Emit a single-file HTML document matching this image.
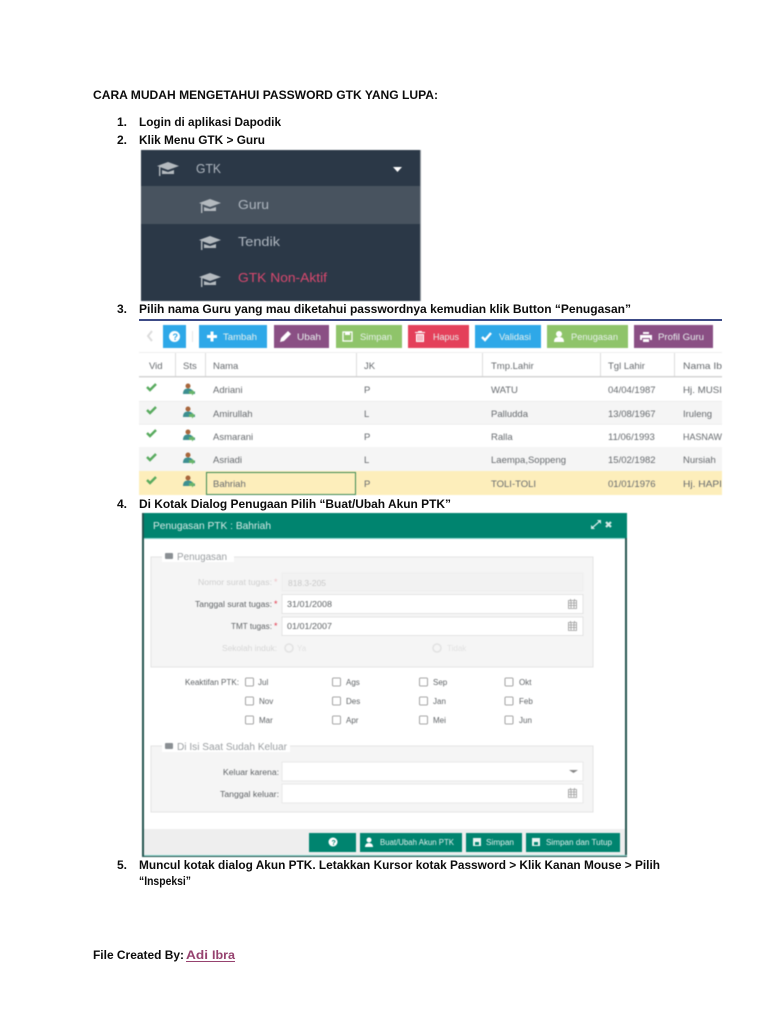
<!DOCTYPE html>
<html><head><meta charset="utf-8"><title>Cara Mudah</title>
<style>
html,body{margin:0;padding:0;background:#fff;width:768px;height:1024px;overflow:hidden}
svg{display:block;font-family:"Liberation Sans",sans-serif}
.d{font-weight:bold;font-size:12px;fill:#0c0c0c}
.t{font-size:9.500px;fill:#666a6e}
.b{font-size:9px;fill:#e8f2ee}
.l{font-size:8px;fill:#606467}
.m{font-size:13px;fill:#aeb6bf}
.blur{filter:blur(.5px)}
</style></head><body>
<svg width="768" height="1024" viewBox="0 0 768 1024">
<rect width="768" height="1024" fill="#fff"/>
<g class="d">
<text x="93" y="99" textLength="345" lengthAdjust="spacingAndGlyphs">CARA MUDAH MENGETAHUI PASSWORD GTK YANG LUPA:</text>
<text x="117" y="126">1.</text><text x="139" y="126" textLength="142" lengthAdjust="spacingAndGlyphs">Login di aplikasi Dapodik</text>
<text x="117" y="144">2.</text><text x="139" y="144" textLength="126" lengthAdjust="spacingAndGlyphs">Klik Menu GTK &gt; Guru</text>
<text x="117" y="313">3.</text><text x="139" y="313" textLength="492" lengthAdjust="spacingAndGlyphs">Pilih nama Guru yang mau diketahui passwordnya kemudian klik Button “Penugasan”</text>
<text x="117" y="508">4.</text><text x="139" y="508" textLength="312" lengthAdjust="spacingAndGlyphs">Di Kotak Dialog Penugaan Pilih “Buat/Ubah Akun PTK”</text>
<text x="117" y="869">5.</text><text x="139" y="869" textLength="521" lengthAdjust="spacingAndGlyphs">Muncul kotak dialog Akun PTK. Letakkan Kursor kotak Password &gt; Klik Kanan Mouse &gt; Pilih</text>
<text x="139" y="885" textLength="52" lengthAdjust="spacingAndGlyphs">“Inspeksi”</text>
<text x="93" y="959" textLength="91" lengthAdjust="spacingAndGlyphs">File Created By:</text>
<text x="186" y="959" textLength="22" lengthAdjust="spacingAndGlyphs" style="fill:#96426f">Adi</text>
<text x="212" y="959" textLength="23" lengthAdjust="spacingAndGlyphs" style="fill:#96426f">Ibra</text>
</g>
<rect x="186" y="961" width="49" height="1" fill="#96426f"/>

<!-- Menu -->
<g class="blur">
<rect x="141" y="150" width="279" height="151" fill="#2b3847"/>
<rect x="141" y="186" width="279" height="38" fill="#48535f"/>
<rect x="420" y="150" width="1" height="151" fill="#9aa0a6"/>
<g fill="#b4babf">
<path d="M157 166l11-4 11 4-11 4z"/><path d="M162 170v4h12v-4l-6 2zM159 167h1.400v9h-1.400z"/>
<path d="M199 203l11-4 11 4-11 4z"/><path d="M204 207v4h12v-4l-6 2zM201 204h1.400v9h-1.400z"/>
<path d="M199 240l11-4 11 4-11 4z"/><path d="M204 244v4h12v-4l-6 2zM201 241h1.400v9h-1.400z"/>
<path d="M199 277l11-4 11 4-11 4z"/><path d="M204 281v4h12v-4l-6 2zM201 278h1.400v9h-1.400z"/>
</g>
<path d="M393 167h9l-4.500 5z" fill="#fff"/>
<text class="m" x="196" y="173" textLength="25" lengthAdjust="spacingAndGlyphs">GTK</text>
<text class="m" x="238" y="209" textLength="31" lengthAdjust="spacingAndGlyphs">Guru</text>
<text class="m" x="238" y="246" textLength="42" lengthAdjust="spacingAndGlyphs">Tendik</text>
<text class="m" x="238" y="282" textLength="89" lengthAdjust="spacingAndGlyphs" style="fill:#d9486e">GTK Non-Aktif</text>
</g>

<!-- Table -->
<rect x="139" y="319" width="583" height="2" fill="#3c4a86"/>
<g class="blur">
<path d="M152 331l-4 5 4 5" fill="none" stroke="#dcdcdc" stroke-width="2"/>
<rect x="163" y="325" width="23" height="23" fill="#2ea8e8"/>
<circle cx="174.500" cy="336.500" r="5.500" fill="#fff"/><text x="172.500" y="340" font-size="9" font-weight="bold" fill="#2ea8e8">?</text>
<rect x="192" y="331" width="1" height="11" fill="#e8e8e8"/>
<rect x="199" y="325" width="68" height="23" fill="#2ea8e8"/>
<path d="M207 335h3.500v-3.500h3v3.500h3.500v3h-3.500v3.500h-3v-3.500h-3.500z" fill="#fff"/>
<text class="b" x="223" y="340" textLength="34" lengthAdjust="spacingAndGlyphs">Tambah</text>
<rect x="274" y="325" width="55" height="23" fill="#8a4f84"/>
<path d="M280 342l1-4 7-7 3 3-7 7z" fill="#fff"/>
<text class="b" x="297" y="340" textLength="24" lengthAdjust="spacingAndGlyphs">Ubah</text>
<rect x="336" y="325" width="66" height="23" fill="#8fc46a"/>
<rect x="343" y="332" width="9" height="9" fill="none" stroke="#fff" stroke-width="1.300"/><rect x="345" y="332" width="5" height="3" fill="#fff"/>
<text class="b" x="360" y="340" textLength="32" lengthAdjust="spacingAndGlyphs">Simpan</text>
<rect x="408" y="325" width="61" height="23" fill="#e4405a"/>
<path d="M416 334h8v8h-8z" fill="#fff"/><path d="M415 332h10v1h-10zM418 331h4v1h-4z" fill="#fff"/><path d="M418 335v6M420 335v6M422 335v6" stroke="#e4405a" stroke-width=".7"/>
<text class="b" x="433" y="340" textLength="26" lengthAdjust="spacingAndGlyphs">Hapus</text>
<rect x="475" y="325" width="66" height="23" fill="#2ea8e8"/>
<path d="M482 337l3 3 6-7" fill="none" stroke="#fff" stroke-width="2.400"/>
<text class="b" x="499" y="340" textLength="32" lengthAdjust="spacingAndGlyphs">Validasi</text>
<rect x="547" y="325" width="81" height="23" fill="#8fc46a"/>
<circle cx="559" cy="334" r="3" fill="#fff"/><path d="M554 342c0-4 2-5 5-5s5 1 5 5z" fill="#fff"/>
<text class="b" x="571" y="340" textLength="47" lengthAdjust="spacingAndGlyphs">Penugasan</text>
<rect x="634" y="325" width="79" height="23" fill="#8a4f84"/>
<path d="M640 335h12v5h-2v-2h-8v2h-2zM643 332h6v2h-6zM643 339h6v3h-6z" fill="#fff"/>
<text class="b" x="658" y="340" textLength="46" lengthAdjust="spacingAndGlyphs">Profil Guru</text>

<rect x="139" y="352" width="583" height="1" fill="#eee"/>
<rect x="139" y="376" width="583" height="1.500" fill="#d4d4d4"/>
<rect x="139" y="401" width="583" height="23" fill="#f5f5f5"/>
<rect x="139" y="447" width="583" height="24" fill="#f5f5f5"/>
<rect x="139" y="471" width="583" height="24" fill="#fdeebb"/>
<rect x="139" y="401" width="583" height=".6" fill="#e6e6e6"/><rect x="139" y="424" width="583" height=".6" fill="#e6e6e6"/>
<g fill="#dedede">
<rect x="175" y="353" width="1" height="23"/><rect x="205" y="353" width="1" height="23"/><rect x="356" y="353" width="1" height="23"/><rect x="482" y="353" width="1" height="23"/><rect x="600" y="353" width="1" height="23"/><rect x="674" y="353" width="1" height="23"/>
</g>
<rect x="206.500" y="472.500" width="149" height="22" fill="none" stroke="#3e8a55"/>

<g class="t">
<text x="149" y="369">Vid</text><text x="183" y="369">Sts</text><text x="213" y="369">Nama</text><text x="364" y="369">JK</text><text x="491" y="369">Tmp.Lahir</text><text x="608" y="369">Tgl Lahir</text><text x="683" y="369" textLength="39" lengthAdjust="spacingAndGlyphs">Nama Ib</text>
<text x="213" y="393">Adriani</text><text x="364" y="393">P</text><text x="491" y="393">WATU</text><text x="608" y="393">04/04/1987</text><text x="683" y="393" textLength="39" lengthAdjust="spacingAndGlyphs">Hj. MUSI</text>
<text x="213" y="417">Amirullah</text><text x="364" y="417">L</text><text x="491" y="417">Palludda</text><text x="608" y="417">13/08/1967</text><text x="683" y="417">Iruleng</text>
<text x="213" y="440">Asmarani</text><text x="364" y="440">P</text><text x="491" y="440">Ralla</text><text x="608" y="440">11/06/1993</text><text x="683" y="440" textLength="39" lengthAdjust="spacingAndGlyphs">HASNAW</text>
<text x="213" y="463">Asriadi</text><text x="364" y="463">L</text><text x="491" y="463">Laempa,Soppeng</text><text x="608" y="463">15/02/1982</text><text x="683" y="463">Nursiah</text>
<text x="213" y="487">Bahriah</text><text x="364" y="487">P</text><text x="491" y="487">TOLI-TOLI</text><text x="608" y="487">01/01/1976</text><text x="683" y="487" textLength="39" lengthAdjust="spacingAndGlyphs">Hj. HAPI</text>
</g>
<g fill="none" stroke="#58ab5e" stroke-width="2.400">
<path d="M147 387l3 3 6-6"/><path d="M147 410l3 3 6-6"/><path d="M147 433l3 3 6-6"/><path d="M147 457l3 3 6-6"/><path d="M147 480l3 3 6-6"/>
</g>
<g>
<g><circle cx="188" cy="386" r="2.500" fill="#a8663c"/><path d="M183 394c0-4 2-5.500 5-5.500s4 1 4.500 3h2.500v2.500z" fill="#3d8f90"/><path d="M189 391h3v-1.500l3 3-3 3v-1.500h-3z" fill="#69b56a"/></g>
<g><circle cx="188" cy="409" r="2.500" fill="#a8663c"/><path d="M183 417c0-4 2-5.500 5-5.500s4 1 4.500 3h2.500v2.500z" fill="#3d8f90"/><path d="M189 414h3v-1.500l3 3-3 3v-1.500h-3z" fill="#69b56a"/></g>
<g><circle cx="188" cy="432" r="2.500" fill="#a8663c"/><path d="M183 440c0-4 2-5.500 5-5.500s4 1 4.500 3h2.500v2.500z" fill="#3d8f90"/><path d="M189 437h3v-1.500l3 3-3 3v-1.500h-3z" fill="#69b56a"/></g>
<g><circle cx="188" cy="455" r="2.500" fill="#a8663c"/><path d="M183 463c0-4 2-5.500 5-5.500s4 1 4.500 3h2.500v2.500z" fill="#3d8f90"/><path d="M189 460h3v-1.500l3 3-3 3v-1.500h-3z" fill="#69b56a"/></g>
<g><circle cx="188" cy="478" r="2.500" fill="#a8663c"/><path d="M183 486c0-4 2-5.500 5-5.500s4 1 4.500 3h2.500v2.500z" fill="#3d8f90"/><path d="M189 483h3v-1.500l3 3-3 3v-1.500h-3z" fill="#69b56a"/></g>
</g>
</g>

<!-- Dialog -->
<g class="blur">
<rect x="142" y="513" width="485" height="344" fill="#24544f"/>
<rect x="144" y="513" width="481" height="342" fill="#fff"/>
<rect x="144" y="513" width="483" height="25" fill="#00846f"/>
<rect x="144" y="538" width="481" height="1" fill="#8fd8d0"/>
<text x="153" y="529" font-size="10.500" fill="#d9ece8" textLength="118" lengthAdjust="spacingAndGlyphs">Penugasan PTK : Bahriah</text>
<path d="M592 528l8-7" stroke="#d5ebe7" stroke-width="1.200" fill="none"/><path d="M597 520h4v4zM591 525v4h4z" fill="#d5ebe7"/>
<path d="M606 522l5 5M611 522l-5 5" stroke="#d5ebe7" stroke-width="2.200"/>

<rect x="151" y="557" width="442" height="110" fill="#f5f5f5" stroke="#e4e4e4"/>
<rect x="162" y="550" width="72" height="12" fill="#fff"/>
<rect x="165" y="553" width="8" height="6" rx="1" fill="#8a8f93"/>
<text x="177" y="560" font-size="10" fill="#9a9ea1" textLength="50" lengthAdjust="spacingAndGlyphs">Penugasan</text>
<rect x="282" y="573" width="301" height="18" fill="#f2f2f2" stroke="#eeeeee"/>
<rect x="282" y="594.500" width="301" height="19" fill="#fff" stroke="#e4e4e4"/>
<rect x="282" y="617" width="301" height="18.500" fill="#fff" stroke="#e4e4e4"/>
<g class="l">
<text x="198" y="585" textLength="74" lengthAdjust="spacingAndGlyphs" style="fill:#cfcfcf">Nomor surat tugas:</text>
<text x="195" y="607" textLength="77" lengthAdjust="spacingAndGlyphs">Tanggal surat tugas:</text>
<text x="231" y="629" textLength="41" lengthAdjust="spacingAndGlyphs">TMT tugas:</text>
<text x="222" y="651" textLength="55" lengthAdjust="spacingAndGlyphs" style="fill:#d6d6d6">Sekolah induk:</text>
<text x="288" y="586" textLength="38" lengthAdjust="spacingAndGlyphs" style="fill:#c9c9c9">818.3-205</text>
<text x="287" y="607" textLength="45" lengthAdjust="spacingAndGlyphs">31/01/2008</text>
<text x="287" y="629" textLength="45" lengthAdjust="spacingAndGlyphs">01/01/2007</text>
<text x="297" y="651" style="fill:#e2e2e2">Ya</text>
<text x="447" y="651" style="fill:#e2e2e2">Tidak</text>
</g>
<g fill="#e23a4e" font-size="9"><text x="274" y="607">*</text><text x="274" y="629">*</text></g>
<text x="274" y="585" font-size="9" fill="#eec5c9">*</text>
<circle cx="289" cy="648" r="4" fill="none" stroke="#e2e2e2" stroke-width="1.500"/>
<circle cx="437" cy="648" r="4" fill="none" stroke="#e2e2e2" stroke-width="1.500"/>

<g fill="#fff" stroke="#8c8c8c" stroke-width=".8">
<rect x="245.500" y="678" width="8" height="8" rx="1"/><rect x="332.500" y="678" width="8" height="8" rx="1"/><rect x="419.500" y="678" width="8" height="8" rx="1"/><rect x="505" y="678" width="8" height="8" rx="1"/>
<rect x="245.500" y="697" width="8" height="8" rx="1"/><rect x="332.500" y="697" width="8" height="8" rx="1"/><rect x="419.500" y="697" width="8" height="8" rx="1"/><rect x="505" y="697" width="8" height="8" rx="1"/>
<rect x="245.500" y="716" width="8" height="8" rx="1"/><rect x="332.500" y="716" width="8" height="8" rx="1"/><rect x="419.500" y="716" width="8" height="8" rx="1"/><rect x="505" y="716" width="8" height="8" rx="1"/>
</g>
<g class="l">
<text x="185" y="685" textLength="54" lengthAdjust="spacingAndGlyphs">Keaktifan PTK:</text>
<text x="258" y="685">Jul</text><text x="346" y="685">Ags</text><text x="433" y="685">Sep</text><text x="519" y="685">Okt</text>
<text x="259" y="704">Nov</text><text x="346" y="704">Des</text><text x="433" y="704">Jan</text><text x="519" y="704">Feb</text>
<text x="259" y="723">Mar</text><text x="346" y="723">Apr</text><text x="433" y="723">Mei</text><text x="519" y="723">Jun</text>
</g>

<rect x="151" y="746" width="442" height="66" fill="#f5f5f5" stroke="#e4e4e4"/>
<rect x="162" y="740" width="128" height="12" fill="#fff"/>
<rect x="165" y="743" width="8" height="6" rx="1" fill="#8a8f93"/>
<text x="177" y="750" font-size="10" fill="#9a9ea1" textLength="110" lengthAdjust="spacingAndGlyphs">Di Isi Saat Sudah Keluar</text>
<rect x="282" y="762" width="301" height="19" fill="#fff" stroke="#e8e8e8"/>
<rect x="282" y="784" width="301" height="19" fill="#fff" stroke="#e8e8e8"/>
<path d="M569 770h9l-4.500 3z" fill="#888"/>
<g fill="none" stroke="#9a9a9a" stroke-width=".8">
<path d="M568.500 600.500h8v8h-8zM568.500 603h8M568.500 605.500h8M571 601v7M574 601v7M570.500 599v2M574.500 599v2"/>
<path d="M568.500 622.500h8v8h-8zM568.500 625h8M568.500 627.500h8M571 623v7M574 623v7M570.500 621v2M574.500 621v2"/>
<path d="M568.500 789.500h8v8h-8zM568.500 792h8M568.500 794.500h8M571 790v7M574 790v7M570.500 788v2M574.500 788v2"/>
</g>
<g class="l">
<text x="223" y="775" textLength="56" lengthAdjust="spacingAndGlyphs">Keluar karena:</text>
<text x="220" y="797" textLength="59" lengthAdjust="spacingAndGlyphs">Tanggal keluar:</text>
</g>

<rect x="144" y="829" width="481" height="26" fill="#eeeeee"/>
<rect x="144" y="855" width="483" height="1" fill="#8fd8d0"/>
<g fill="#00846f">
<rect x="309" y="833" width="47" height="19"/><rect x="360" y="833" width="102" height="19"/><rect x="466" y="833" width="56" height="19"/><rect x="526" y="833" width="94" height="19"/>
</g>
<circle cx="333" cy="842" r="4.500" fill="#fff"/><text x="331.500" y="845" font-size="7" font-weight="bold" fill="#00846f">?</text>
<circle cx="369" cy="840" r="2.500" fill="#fff"/><path d="M365 847c0-3 2-4 4-4s4 1 4 4z" fill="#fff"/>
<rect x="473" y="838" width="8" height="8" fill="#eaf4f2"/><rect x="475" y="842" width="4" height="3" fill="#00846f"/>
<rect x="532" y="838" width="8" height="8" fill="#eaf4f2"/><rect x="534" y="842" width="4" height="3" fill="#00846f"/>
<g font-size="8" fill="#e0efec">
<text x="380" y="845" textLength="74" lengthAdjust="spacingAndGlyphs">Buat/Ubah Akun PTK</text>
<text x="486" y="845" textLength="28" lengthAdjust="spacingAndGlyphs">Simpan</text>
<text x="546" y="845" textLength="66" lengthAdjust="spacingAndGlyphs">Simpan dan Tutup</text>
</g>
</g>
</svg>
</body></html>
